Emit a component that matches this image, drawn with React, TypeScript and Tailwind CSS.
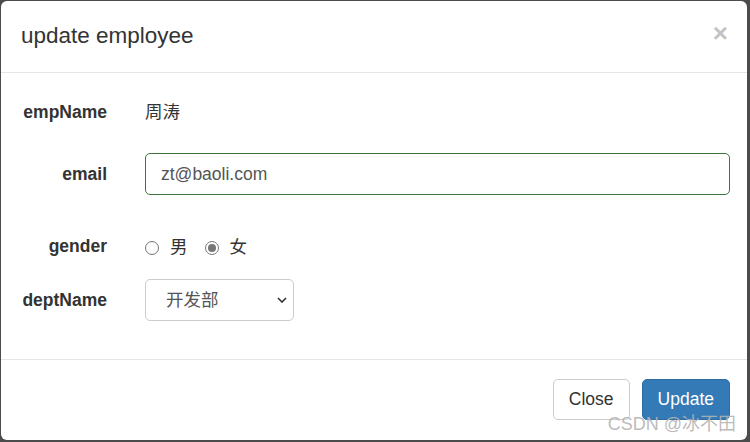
import { useState } from 'react';

const font = '[font-family:"Liberation_Sans","Noto_Sans_CJK_SC",Arial,sans-serif]';

function Radio({ checked, label, onSelect }: { checked: boolean; label: string; onSelect: () => void }) {
  return (
    <button type="button" onClick={onSelect} className="flex items-center">
      <span className="flex h-[14px] w-[14px] items-center justify-center rounded-full border border-[#767676] bg-white">
        {checked && <span className="h-[8px] w-[8px] rounded-full bg-[#757575]" />}
      </span>
      <span className="ml-[11px] text-[17.5px] leading-none text-[#333]">{label}</span>
    </button>
  );
}

export default function App() {
  const [gender, setGender] = useState<'M' | 'F'>('F');
  const [email, setEmail] = useState('zt@baoli.com');

  return (
    <div className={`relative h-[442px] w-[750px] bg-[#4b4b4b] pl-[1px] pt-[1px] ${font}`}>
      <div className="flex h-[439px] w-[746px] flex-col rounded-[6px] bg-white">
        {/* header */}
        <div className="flex h-[72px] items-center justify-between border-b border-[#e5e5e5] pl-[20px] pr-[19px]">
          <h4 className="text-[22.5px] leading-none text-[#333]">update employee</h4>
          <button type="button" className="-mt-[8px] text-[26px] font-bold leading-none text-[#c4c4c4]">
            ×
          </button>
        </div>

        {/* body */}
        <div className="border-b border-[#e5e5e5] pb-[38px] pl-[19px] pr-[17px] pt-[18px]">
          <div className="flex h-[42px] items-center">
            <label className="w-[87px] text-right text-[17.5px] font-bold text-[#333]">empName</label>
            <span className="ml-[38px] text-[17.5px] text-[#333]">周涛</span>
          </div>

          <div className="mt-[20px] flex h-[42px] items-center">
            <label className="w-[87px] text-right text-[17.5px] font-bold text-[#333]">email</label>
            <input
              value={email}
              onChange={(e) => setEmail(e.target.value)}
              className="ml-[38px] h-[42px] flex-1 rounded-[5px] border border-[#3c763d] px-[15px] text-[17.5px] text-[#555] outline-none"
            />
          </div>

          <div className="mt-[30px] flex h-[42px] items-center">
            <label className="w-[87px] text-right text-[17.5px] font-bold text-[#333]">gender</label>
            <div className="ml-[38px] mt-[3px] flex items-center gap-[17px]">
              <Radio checked={gender === 'M'} label="男" onSelect={() => setGender('M')} />
              <Radio checked={gender === 'F'} label="女" onSelect={() => setGender('F')} />
            </div>
          </div>

          <div className="mt-[12px] flex h-[42px] items-center">
            <label className="w-[87px] text-right text-[17.5px] font-bold text-[#333]">deptName</label>
            <div className="ml-[38px] flex h-[42px] w-[149px] items-center justify-between rounded-[5px] border border-[#ccc] pl-[20px] pr-[6px]">
              <span className="text-[17.5px] text-[#555]">开发部</span>
              <svg width="10" height="6" viewBox="0 0 10 6" fill="none">
                <path d="M1 1l4 4 4-4" stroke="#333" strokeWidth="1.6" />
              </svg>
            </div>
          </div>
        </div>

        {/* footer */}
        <div className="flex justify-end gap-[12px] pr-[17px] pt-[19px]">
          <button
            type="button"
            className="h-[41px] rounded-[5px] border border-[#ccc] bg-white px-[15px] text-[17.5px] text-[#333]"
          >
            Close
          </button>
          <button
            type="button"
            className="h-[41px] rounded-[5px] border border-[#2e6da4] bg-[#337ab7] px-[15px] text-[17.5px] text-white"
          >
            Update
          </button>
        </div>
      </div>

      <span className="absolute bottom-[9px] right-[14px] text-[18px] leading-none text-[#b3b3b3]/90">
        CSDN @冰不田
      </span>
    </div>
  );
}
